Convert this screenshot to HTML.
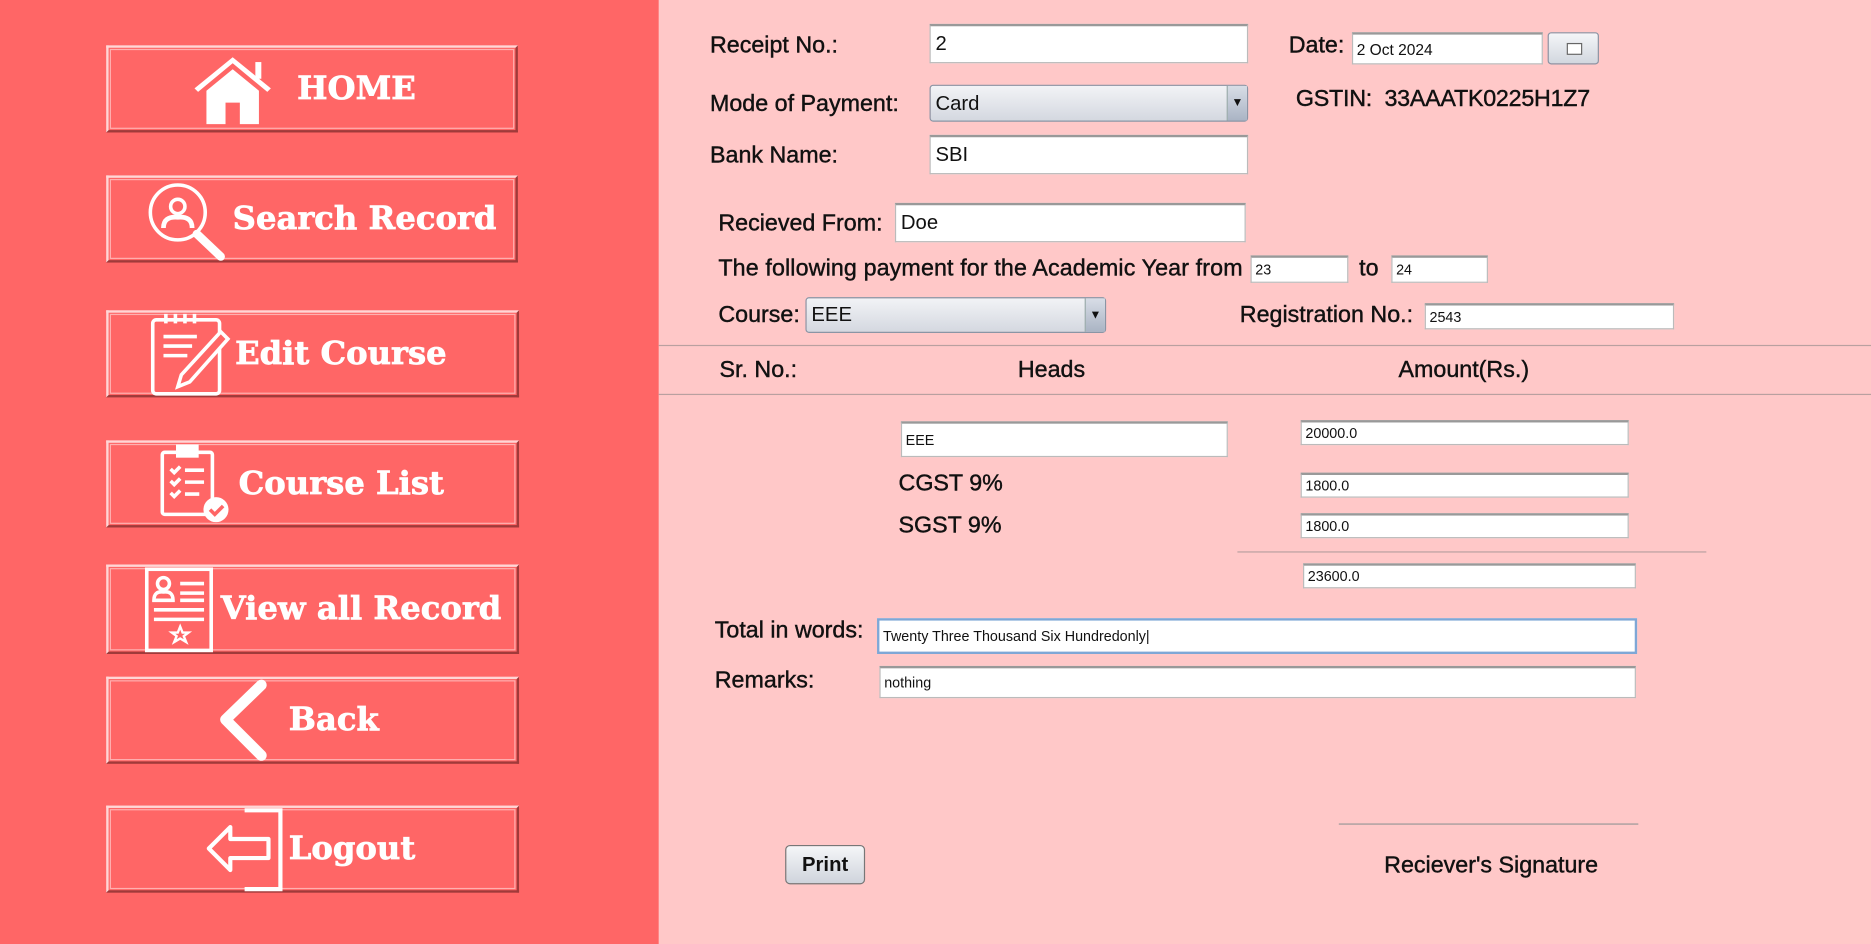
<!DOCTYPE html>
<html><head><meta charset="utf-8"><style>
html,body{margin:0;padding:0;width:1871px;height:944px;overflow:hidden;background:#ffc8c8}
#w{position:absolute;left:0;top:0;width:1568px;height:791px;transform:scale(1.19324,1.19343);transform-origin:0 0;font-family:"Liberation Sans",sans-serif;color:#111}
.a{position:absolute}
#left{left:0;top:0;width:552px;height:791px;background:#ff6666}
.btn{position:absolute;box-sizing:border-box;border:2px solid;border-color:#ffd6d6 #a03a3a #a03a3a #ffd6d6;outline:1px solid #ffb0b0;outline-offset:-4px;color:#fff;font-family:"DejaVu Serif","Liberation Serif",serif;font-weight:bold;font-size:27px;white-space:nowrap;-webkit-text-stroke:0.6px #fff}
.btn span{position:absolute;top:50%;transform:translateY(-52%)}
.btn svg{position:absolute}
.lbl{position:absolute;font-size:19.5px;white-space:nowrap;-webkit-text-stroke:0.35px #111}
.in{position:absolute;box-sizing:border-box;background:#fff;border:1px solid #bbb;border-top:2px solid #999;font-size:17px;padding-left:4px;display:flex;align-items:center;white-space:nowrap}
.sm{font-size:12px;padding-left:3px}
.cb{position:absolute;box-sizing:border-box;border:1px solid #8a95a5;border-radius:3px;background:linear-gradient(#f2f3f6,#d4d8e0);font-size:17px;padding-left:4px;display:flex;align-items:center}
.cb i{position:absolute;right:0;top:0;bottom:0;width:16px;border-left:1px solid #9aa;background:linear-gradient(#d8dde6,#aab4c4);font-style:normal;font-size:10px;display:flex;align-items:center;justify-content:center}
.hl{position:absolute;height:1px;background:#b9a0a0}
</style></head><body><div id="w">
<div id="left" class="a"></div>

<div class="btn" style="left:89px;top:38px;width:345px;height:73px">
<svg style="left:70px;top:4px" width="68" height="62" viewBox="0 0 68 62" fill="#fff"><path d="M2 30 L34 4 L66 30 L63 33 L34 9 L5 33Z"/><rect x="53" y="8" width="5" height="14"/><path d="M12 32 L34 14 L56 32 L56 60 L40 60 L40 42 L28 42 L28 60 L12 60Z"/></svg>
<span style="left:158px">HOME</span></div>

<div class="btn" style="left:89px;top:147px;width:345px;height:73px">
<svg style="left:32px;top:2px" width="70" height="70" viewBox="0 0 70 70" fill="none" stroke="#fff"><circle cx="26" cy="27" r="23" stroke-width="3"/><circle cx="26" cy="22" r="6" stroke-width="3"/><path d="M14 40 Q14 30 26 31 Q38 30 38 40" stroke-width="4"/><path d="M42 45 L62 64" stroke-width="7" stroke-linecap="round"/></svg>
<span style="left:104px">Search Record</span></div>

<div class="btn" style="left:89px;top:260px;width:346px;height:73px">
<svg style="left:34px;top:0px" width="72" height="70" viewBox="0 0 72 70" fill="none" stroke="#fff" stroke-width="3"><rect x="3" y="6" width="56" height="62" rx="3"/><path d="M14 1v8M22 1v8M30 1v8M38 1v8M12 20h28M12 28h24M12 36h20"/><path d="M60 16 L66 22 L34 58 L24 62 L27 52Z" fill="#ff6666"/></svg>
<span style="left:106px">Edit Course</span></div>

<div class="btn" style="left:89px;top:369px;width:346px;height:73px">
<svg style="left:42px;top:0px" width="60" height="68" viewBox="0 0 60 68" fill="none" stroke="#fff" stroke-width="3"><rect x="3" y="8" width="42" height="52" rx="2"/><rect x="16" y="3" width="16" height="8" fill="#fff"/><path d="M10 22l3 3 5-5M10 32l3 3 5-5M10 42l3 3 5-5M22 23h16M22 33h16M22 43h12"/><circle cx="48" cy="56" r="9" fill="#fff"/><path d="M43 56l4 4 7-7" stroke="#ff6666"/></svg>
<span style="left:109px">Course List</span></div>

<div class="btn" style="left:89px;top:473px;width:346px;height:75px">
<svg style="left:30px;top:0px" width="60" height="72" viewBox="0 0 60 72" fill="none" stroke="#fff" stroke-width="3"><rect x="2" y="2" width="54" height="68"/><circle cx="16" cy="14" r="5"/><path d="M8 28 Q8 20 16 21 Q24 20 24 28Z"/><path d="M30 14h20M30 22h20M30 28h20M8 36h42M8 44h42"/><path d="M30 50l2 5h5l-4 3 2 5-5-3-5 3 2-5-4-3h5z" stroke-width="2"/></svg>
<span style="left:94px">View all Record</span></div>

<div class="btn" style="left:89px;top:567px;width:346px;height:73px">
<svg style="left:88px;top:0px" width="50" height="70" viewBox="0 0 50 70" fill="none" stroke="#fff" stroke-width="9" stroke-linecap="round" stroke-linejoin="round"><path d="M40 5 L10 34 L40 64"/></svg>
<span style="left:151px">Back</span></div>

<div class="btn" style="left:89px;top:675px;width:346px;height:73px">
<svg style="left:78px;top:0px" width="72" height="70" viewBox="0 0 72 70" fill="none" stroke="#fff" stroke-width="3.5"><path d="M36 2 H66 V68 H36"/><path d="M6 34 L24 16 V26 H56 V42 H24 V52Z" stroke-linejoin="round"/></svg>
<span style="left:151px">Logout</span></div>

<div class="lbl" style="left:595px;top:27px">Receipt No.:</div>
<div class="in" style="left:779px;top:20px;width:267px;height:33px">2</div>
<div class="lbl" style="left:1080px;top:27px">Date:</div>
<div class="in sm" style="left:1133px;top:27px;width:160px;height:27px;font-size:13px">2 Oct 2024</div>
<div class="a" style="left:1297px;top:27px;width:43px;height:27px;box-sizing:border-box;border:1px solid #8a95a5;border-radius:3px;background:linear-gradient(#f4f5f8,#d2d7df)"><div class="a" style="left:15px;top:8px;width:11px;height:8px;border:1px solid #666;background:#fff"></div></div>
<div class="lbl" style="left:595px;top:76px">Mode of Payment:</div>
<div class="cb" style="left:779px;top:71px;width:267px;height:31px">Card<i>▼</i></div>
<div class="lbl" style="left:1086px;top:72px;letter-spacing:-0.2px">GSTIN:&nbsp; 33AAATK0225H1Z7</div>
<div class="lbl" style="left:595px;top:119px">Bank Name:</div>
<div class="in" style="left:779px;top:113px;width:267px;height:33px">SBI</div>
<div class="lbl" style="left:602px;top:176px">Recieved From:</div>
<div class="in" style="left:750px;top:170px;width:294px;height:33px">Doe</div>
<div class="lbl" style="left:602px;top:214px;letter-spacing:0.1px">The following payment for the Academic Year from</div>
<div class="in sm" style="left:1048px;top:214px;width:82px;height:23px">23</div>
<div class="lbl" style="left:1139px;top:214px">to</div>
<div class="in sm" style="left:1166px;top:214px;width:81px;height:23px">24</div>
<div class="lbl" style="left:602px;top:253px">Course:</div>
<div class="cb" style="left:675px;top:249px;width:252px;height:30px">EEE<i>▼</i></div>
<div class="lbl" style="left:1039px;top:253px">Registration No.:</div>
<div class="in sm" style="left:1194px;top:254px;width:209px;height:22px">2543</div>
<div class="hl" style="left:552px;top:289px;width:1016px"></div>
<div class="lbl" style="left:603px;top:299px">Sr. No.:</div>
<div class="lbl" style="left:853px;top:299px">Heads</div>
<div class="lbl" style="left:1172px;top:299px">Amount(Rs.)</div>
<div class="hl" style="left:552px;top:330px;width:1016px"></div>
<div class="in sm" style="left:755px;top:353px;width:274px;height:30px">EEE</div>
<div class="in sm" style="left:1090px;top:352px;width:275px;height:21px">20000.0</div>
<div class="lbl" style="left:753px;top:394px">CGST 9%</div>
<div class="in sm" style="left:1090px;top:396px;width:275px;height:21px">1800.0</div>
<div class="lbl" style="left:753px;top:429px">SGST 9%</div>
<div class="in sm" style="left:1090px;top:430px;width:275px;height:21px">1800.0</div>
<div class="hl" style="left:1037px;top:462px;width:393px"></div>
<div class="in sm" style="left:1092px;top:472px;width:279px;height:21px">23600.0</div>
<div class="lbl" style="left:599px;top:517px">Total in words:</div>
<div class="in sm" style="left:735px;top:518px;width:637px;height:30px;border:2px solid #7fa7d6">Twenty Three Thousand Six Hundredonly|</div>
<div class="lbl" style="left:599px;top:559px">Remarks:</div>
<div class="in sm" style="left:737px;top:558px;width:634px;height:27px">nothing</div>
<div class="hl" style="left:1122px;top:690px;width:251px;background:#999"></div>
<div class="a" style="left:658px;top:708px;width:67px;height:33px;box-sizing:border-box;border:1px solid #777;border-radius:4px;background:linear-gradient(#f5f6f8,#cfd4dc);font-weight:bold;font-size:17px;display:flex;align-items:center;justify-content:center">Print</div>
<div class="lbl" style="left:1160px;top:714px">Reciever's Signature</div>
</div></body></html>
